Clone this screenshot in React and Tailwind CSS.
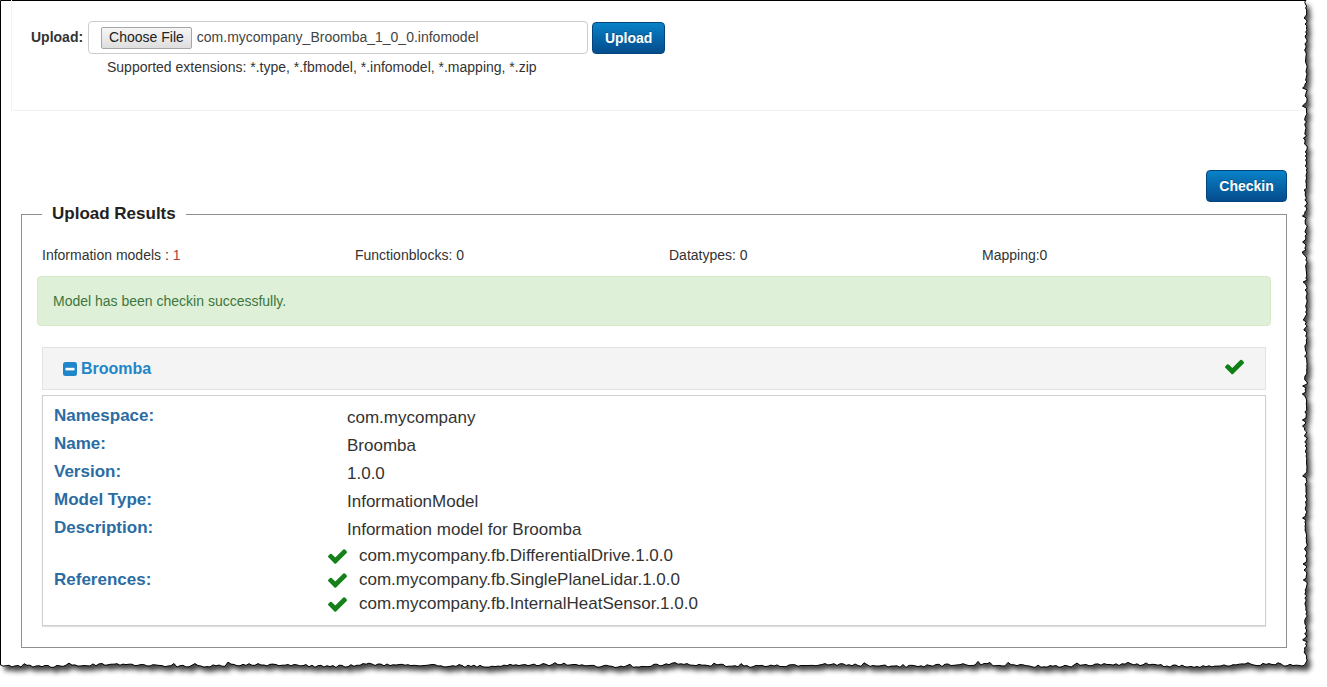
import React from 'react';

// seeded noise so the torn edge is the same on every render
const makeRng = (seed) => {
  let s = seed;
  return () => {
    s = (s * 16807) % 2147483647;
    return s / 2147483647;
  };
};

const buildPaperPath = () => {
  const r = makeRng(7);
  const pts = ['M0.5,0.5', 'L1306,0.5'];
  for (let y = 2; y <= 664; y += 2) {
    let x = 1306 + (r() - 0.5) * 2.6;
    if (r() < 0.1) x -= 2.5;
    pts.push(`L${x.toFixed(1)},${y}`);
  }
  for (let x = 1305; x >= 0; x -= 3) {
    let y = 665.5 + Math.sin(x / 23) * 0.9 + (r() - 0.5) * 2.4;
    if (r() < 0.08) y -= 2;
    pts.push(`L${x},${y.toFixed(1)}`);
  }
  pts.push('L0.5,665 Z');
  return pts.join(' ');
};

const paperPath = buildPaperPath();

const Check = ({ className }) => (
  <svg viewBox="121 334 1550 1188" className={className} fill="currentColor">
    <path d="M1671 566q0 40-28 68l-724 724-136 136q-28 28-68 28t-68-28l-136-136-362-362q-28-28-28-68t28-68l136-136q28-28 68-28t68 28l294 295 656-657q28-28 68-28t68 28l136 136q28 28 28 68z" />
  </svg>
);

const MinusSquare = () => (
  <svg viewBox="0 0 14 14" className="w-[14px] h-[14px]">
    <rect x="0" y="0" width="14" height="14" rx="2.5" fill="#1f86c9" />
    <rect x="2.5" y="5.8" width="9" height="2.6" fill="#fff" />
  </svg>
);

const details = [
  ['Namespace:', 'com.mycompany'],
  ['Name:', 'Broomba'],
  ['Version:', '1.0.0'],
  ['Model Type:', 'InformationModel'],
  ['Description:', 'Information model for Broomba'],
];

const references = [
  'com.mycompany.fb.DifferentialDrive.1.0.0',
  'com.mycompany.fb.SinglePlaneLidar.1.0.0',
  'com.mycompany.fb.InternalHeatSensor.1.0.0',
];

const btnBlue =
  'flex items-center justify-center rounded-[4px] border border-[#03467f] bg-gradient-to-b from-[#0a82c8] to-[#044c8c] text-white font-bold text-[14px] [text-shadow:0_-1px_0_rgba(0,0,0,0.25)]';

export default function App() {
  return (
    <div
      className="relative w-[1327px] h-[687px] overflow-hidden bg-white text-[#333]"
      style={{ fontFamily: '"Liberation Sans", Arial, sans-serif' }}
    >
      {/* torn paper frame */}
      <svg className="absolute inset-0 w-[1327px] h-[687px]" viewBox="0 0 1327 687">
        <defs>
          <filter id="blur" x="-5%" y="-5%" width="110%" height="110%">
            <feGaussianBlur stdDeviation="2.4" />
          </filter>
        </defs>
        <path d={paperPath} fill="#333" opacity="0.9" transform="translate(4,5)" filter="url(#blur)" />
        <path d={paperPath} fill="#fff" stroke="#000" strokeWidth="1" />
      </svg>

      <div className="relative w-[1306px] h-[665px]">
        {/* upload panel */}
        <div className="ml-[11px] h-[111px] border-l border-b border-[#f2f2f2] pt-[21px]">
          <div className="flex items-start pl-[19px]">
            <div className="h-[33px] flex items-center font-bold text-[14px]">Upload:</div>
            <div className="ml-[5px] w-[500px] h-[33px] border border-[#ccc] rounded-[4px] flex items-center pl-[12px]">
              <div className="h-[22px] px-[7px] flex items-center border border-[#a6a6a6] rounded-[2px] bg-gradient-to-b from-[#f6f6f6] to-[#dedede] text-[14px] text-[#222]">
                Choose File
              </div>
              <span className="ml-[5px] text-[14px] text-[#444]">com.mycompany_Broomba_1_0_0.infomodel</span>
            </div>
            <button className={`${btnBlue} ml-[4px] mt-[1px] w-[73px] h-[32px]`}>Upload</button>
          </div>
          <p className="pl-[95px] mt-[3px] text-[14px] leading-[20px]">
            Supported extensions: *.type, *.fbmodel, *.infomodel, *.mapping, *.zip
          </p>
        </div>

        <div className="pl-[21px] w-[1287px]">
          <div className="flex justify-end mt-[59px]">
            <button className={`${btnBlue} w-[81px] h-[32px]`}>Checkin</button>
          </div>

          <fieldset className="mt-[2px] border border-[#8f8f8f] px-[15px] pb-[21px]">
            <legend className="ml-[5px] px-[10px] text-[17px] font-bold leading-[20px] text-[#222]">
              Upload Results
            </legend>

            <div className="flex pl-[5px] mt-[21px] text-[14px] leading-[20px]">
              <div className="w-[313px]">
                Information models : <span className="text-[#a94442]">1</span>
              </div>
              <div className="w-[314px]">Functionblocks: 0</div>
              <div className="w-[313px]">Datatypes: 0</div>
              <div>Mapping:0</div>
            </div>

            <div className="mt-[11px] h-[50px] flex items-center pl-[15px] rounded-[4px] border border-[#d6e9c6] bg-[#dff0d8] text-[#3c763d] text-[14px]">
              Model has been checkin successfully.
            </div>

            <div className="mx-[5px] mt-[21px]">
              <div className="h-[43px] flex items-center justify-between border border-[#e3e3e3] bg-[#f4f4f4] pl-[20px] pr-[21px]">
                <div className="flex items-center gap-[4px] text-[#1f86c9] font-bold text-[16px]">
                  <MinusSquare />
                  <span>Broomba</span>
                </div>
                <Check className="w-[19px] h-[16px] text-[#0e7f12] mb-[4px]" />
              </div>

              <div className="mt-[5px] border border-[#cfcfcf] shadow-[0_1px_1px_rgba(0,0,0,0.12)] pt-[8px] pb-[9px] pl-[11px]">
                <div className="grid grid-cols-[293px_1fr] text-[17px]">
                  {details.map(([label, value]) => (
                    <React.Fragment key={label}>
                      <div className="h-[28px] flex items-center font-bold text-[#2b6ca3] -mt-[2px]">{label}</div>
                      <div className="h-[28px] flex items-center">{value}</div>
                    </React.Fragment>
                  ))}
                  <div className="flex items-center font-bold text-[#2b6ca3]">References:</div>
                  <div className="-ml-[19px]">
                    {references.map((ref) => (
                      <div key={ref} className="h-[24px] flex items-center gap-[12px]">
                        <Check className="w-[19px] h-[15px] text-[#16801a]" />
                        <span>{ref}</span>
                      </div>
                    ))}
                  </div>
                </div>
              </div>
            </div>
          </fieldset>
        </div>
      </div>
    </div>
  );
}
